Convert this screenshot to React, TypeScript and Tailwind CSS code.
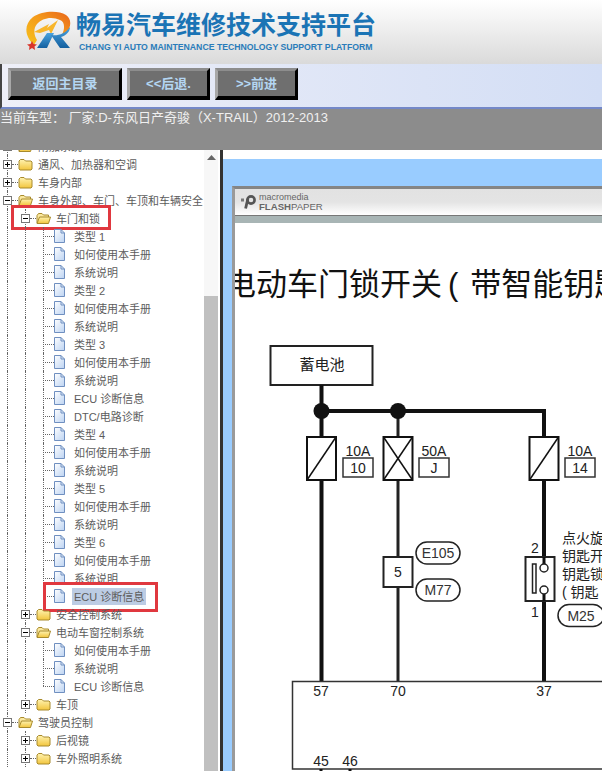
type Row = {
  level: 0 | 1 | 2;
  label: string;
  kind?: "plus" | "minus";
  last?: boolean;
  selected?: boolean;
  marker?: "door" | "ecu";
};

const howTo = "如何使用本手册";
const about = "系统说明";
const ecu = "ECU 诊断信息";

const rows: Row[] = [
  { level: 0, kind: "minus", label: "附加系统" },
  { level: 0, kind: "plus", label: "通风、加热器和空调" },
  { level: 0, kind: "plus", label: "车身内部" },
  { level: 0, kind: "minus", label: "车身外部、车门、车顶和车辆安全" },
  { level: 1, kind: "minus", label: "车门和锁", marker: "door" },
  { level: 2, label: "类型 1" },
  { level: 2, label: howTo },
  { level: 2, label: about },
  { level: 2, label: "类型 2" },
  { level: 2, label: howTo },
  { level: 2, label: about },
  { level: 2, label: "类型 3" },
  { level: 2, label: howTo },
  { level: 2, label: about },
  { level: 2, label: ecu },
  { level: 2, label: "DTC/电路诊断" },
  { level: 2, label: "类型 4" },
  { level: 2, label: howTo },
  { level: 2, label: about },
  { level: 2, label: "类型 5" },
  { level: 2, label: howTo },
  { level: 2, label: about },
  { level: 2, label: "类型 6" },
  { level: 2, label: howTo },
  { level: 2, label: about },
  { level: 2, label: ecu, last: true, selected: true, marker: "ecu" },
  { level: 1, kind: "plus", label: "安全控制系统" },
  { level: 1, kind: "minus", label: "电动车窗控制系统" },
  { level: 2, label: howTo },
  { level: 2, label: about },
  { level: 2, label: ecu, last: true },
  { level: 1, kind: "plus", label: "车顶" },
  { level: 0, kind: "minus", label: "驾驶员控制" },
  { level: 1, kind: "plus", label: "后视镜" },
  { level: 1, kind: "plus", label: "车外照明系统" },
];

function Guide({ half }: { half?: boolean }) {
  return (
    <div className="relative h-full w-[18px] shrink-0">
      <div
        className={`absolute left-[7px] top-0 border-l border-dotted border-[#666] ${half ? "h-1/2" : "h-full"}`}
      />
    </div>
  );
}

function Expander({ kind }: { kind: "plus" | "minus" }) {
  return (
    <div className="relative flex h-full w-[18px] shrink-0 items-center">
      <div className="absolute left-[7px] top-0 h-full border-l border-dotted border-[#666]" />
      <div className="absolute left-[12px] top-1/2 w-[6px] border-t border-dotted border-[#666]" />
      <div className="relative ml-[3px] flex h-[9px] w-[9px] items-center justify-center border border-[#777] bg-white">
        <div className="h-px w-[5px] bg-black" />
        {kind === "plus" && <div className="absolute h-[5px] w-px bg-black" />}
      </div>
    </div>
  );
}

function Folder({ open }: { open: boolean }) {
  return (
    <svg width="15" height="13" viewBox="0 0 15 13" className="mr-[5px] shrink-0">
      <defs>
        <linearGradient id="folderFill" x1="0" y1="0" x2="0" y2="1">
          <stop offset="0" stopColor="#fff3b0" />
          <stop offset="1" stopColor="#f2c53d" />
        </linearGradient>
      </defs>
      {open ? (
        <>
          <path d="M1 11V3.5L2.5 1.5H6L7.5 3H12.5V5" fill="#fbe9a0" stroke="#a88a2c" />
          <path d="M1 11.5L3.5 5H14.5L12.5 11.5Z" fill="url(#folderFill)" stroke="#a88a2c" />
        </>
      ) : (
        <path
          d="M1 11V3L2.5 1.5H6L7.5 3H13L14 4V11L13 12H2Z"
          fill="url(#folderFill)"
          stroke="#a88a2c"
        />
      )}
    </svg>
  );
}

function Doc() {
  return (
    <svg width="11" height="14" viewBox="0 0 11 14" className="mr-[7px] shrink-0">
      <defs>
        <linearGradient id="docFill" x1="0" y1="0" x2="1" y2="1">
          <stop offset="0" stopColor="#ffffff" />
          <stop offset="1" stopColor="#bcd3f2" />
        </linearGradient>
      </defs>
      <path d="M0.5 0.5H7L10.5 4V13.5H0.5Z" fill="url(#docFill)" stroke="#6f8fc0" />
      <path d="M7 0.5V4H10.5" fill="none" stroke="#6f8fc0" />
    </svg>
  );
}

function TreeRow({ row }: { row: Row }) {
  return (
    <div className="relative flex h-[18px] items-center whitespace-nowrap">
      {row.level === 0 && <Expander kind={row.kind!} />}
      {row.level === 1 && (
        <>
          <Guide />
          <Expander kind={row.kind!} />
        </>
      )}
      {row.level === 2 && (
        <>
          <Guide />
          <Guide />
          <div className="relative h-full w-[18px] shrink-0">
            <Guide half={row.last} />
            <div className="absolute left-[7px] top-1/2 w-[11px] border-t border-dotted border-[#666]" />
          </div>
          <Doc />
        </>
      )}
      {row.level < 2 && <Folder open={row.kind === "minus"} />}
      <span
        className={`inline-block pt-[2px] text-[11px] leading-[15px] text-[#5c5c5c] ${row.level === 2 ? "px-[2px]" : ""} ${row.selected ? "bg-[#bccce4]" : ""}`}
      >
        {row.label}
      </span>
      {row.marker === "door" && (
        <div className="absolute left-[11px] top-[-4px] h-[25px] w-[100px] border-[3px] border-[#e0383f]" />
      )}
      {row.marker === "ecu" && (
        <div className="absolute left-[43px] top-[-5px] h-[30px] w-[115px] border-[3px] border-[#e0383f]" />
      )}
    </div>
  );
}

function NavButton({ label, className }: { label: string; className: string }) {
  return (
    <button
      className={`flex h-[32px] items-center justify-center border-[3px] border-b-[4px] border-t-[#8d8d8d] border-l-[#a8a8a8] border-r-black border-b-black bg-[#6f6f6f] text-[13px] font-bold text-[#b4d6f2] ${className}`}
    >
      {label}
    </button>
  );
}

function Logo() {
  return (
    <svg width="48" height="44" viewBox="25 10 48 44" className="shrink-0">
      <defs>
        <linearGradient id="ring" x1="0" y1="1" x2="1" y2="0">
          <stop offset="0" stopColor="#f6c21c" />
          <stop offset="0.55" stopColor="#f49a1a" />
          <stop offset="1" stopColor="#e8641a" />
        </linearGradient>
        <linearGradient id="blue" x1="0" y1="0" x2="0" y2="1">
          <stop offset="0" stopColor="#4aa3e0" />
          <stop offset="1" stopColor="#14609f" />
        </linearGradient>
      </defs>
      <path
        d="M34 45C24 36 24 24 33 17C42 11 58 10 66 15C72 19 71 27 67 32L62 35C65 28 65 22 60 20C52 16 42 18 37 24C33 29 34 35 37 40Z"
        fill="url(#ring)"
      />
      <path d="M34 32L49 24L47 28L58 20L51 34L49 30L40 33Z" fill="#f8b62a" />
      <path d="M32 41L33.5 44L37 44.5L34.5 46.5L35 50L32 48L29 50L29.5 46.5L27 44.5L30.5 44Z" fill="#d8352a" />
      <path d="M47 33H54L47 48H37Z" fill="url(#blue)" />
      <path d="M51 35C58 36 65 34 70 27C70 31 67 35 61 37L70 48H60Z" fill="url(#blue)" />
    </svg>
  );
}

function Fuse({ x, cross }: { x: number; cross?: boolean }) {
  return (
    <g stroke="#111" fill="#fff">
      <rect x={x} y="437" width="29" height="43" strokeWidth="2" />
      <line x1={x} y1="480" x2={x + 29} y2="437" strokeWidth="1.5" />
      {cross && <line x1={x} y1="437" x2={x + 29} y2="480" strokeWidth="1.5" />}
    </g>
  );
}

function FuseLabel({ x, amps, slot }: { x: number; amps: string; slot: string }) {
  return (
    <g fontSize="14" fill="#222" textAnchor="middle">
      <text x={x + 15} y="456">
        {amps}
      </text>
      <rect x={x} y="458" width="30" height="19" fill="#fff" stroke="#333" strokeWidth="1.5" />
      <text x={x + 15} y="473">
        {slot}
      </text>
    </g>
  );
}

function Pill({ x, y, w, label }: { x: number; y: number; w: number; label: string }) {
  return (
    <g>
      <rect x={x} y={y} width={w} height="22" rx="11" fill="#fff" stroke="#222" strokeWidth="1.5" />
      <text x={x + w / 2} y={y + 16} fontSize="14" fill="#333" textAnchor="middle">
        {label}
      </text>
    </g>
  );
}

function Diagram() {
  return (
    <svg width="367" height="441" viewBox="235 330 367 441" className="block">
      <rect x="270.5" y="346" width="102" height="39" fill="#fff" stroke="#222" strokeWidth="2" />
      <text x="322" y="370" fontSize="15" fill="#222" textAnchor="middle">
        蓄电池
      </text>

      <line x1="321.5" y1="385" x2="321.5" y2="682" stroke="#111" strokeWidth="4" />
      <line x1="321" y1="411" x2="546" y2="411" stroke="#111" strokeWidth="4" />
      <line x1="398" y1="411" x2="398" y2="682" stroke="#222" strokeWidth="3" />
      <line x1="544" y1="409" x2="544" y2="682" stroke="#111" strokeWidth="4" />
      <circle cx="321.5" cy="411" r="8" fill="#111" />
      <circle cx="398" cy="411" r="8" fill="#111" />

      <Fuse x={307} />
      <Fuse x={383.5} cross />
      <Fuse x={529.5} />
      <FuseLabel x={343} amps="10A" slot="10" />
      <FuseLabel x={419} amps="50A" slot="J" />
      <FuseLabel x={565} amps="10A" slot="14" />

      <rect x="383.5" y="557" width="29" height="30" fill="#fff" stroke="#222" strokeWidth="2" />
      <text x="398" y="577" fontSize="14" fill="#222" textAnchor="middle">
        5
      </text>
      <Pill x={416} y={542} w={44} label="E105" />
      <Pill x={416} y={579} w={44} label="M77" />

      <rect x="525.5" y="557" width="29" height="44" fill="#fff" stroke="#222" strokeWidth="2" />
      <rect x="532.5" y="564" width="3.5" height="29" fill="#fff" stroke="#222" strokeWidth="1.5" />
      <line x1="544" y1="557" x2="544" y2="564" stroke="#111" strokeWidth="3" />
      <line x1="544" y1="594" x2="544" y2="601" stroke="#111" strokeWidth="3" />
      <circle cx="544" cy="568" r="4" fill="#fff" stroke="#222" strokeWidth="1.5" />
      <circle cx="544" cy="590" r="4" fill="#fff" stroke="#222" strokeWidth="1.5" />
      <text x="535" y="553" fontSize="14" fill="#222" textAnchor="middle">
        2
      </text>
      <text x="535" y="617" fontSize="14" fill="#222" textAnchor="middle">
        1
      </text>
      <g fontSize="14" fill="#222">
        <text x="562" y="543">
          点火旋
        </text>
        <text x="562" y="561">
          钥匙开
        </text>
        <text x="562" y="579">
          钥匙锁
        </text>
        <text x="562" y="597">
          ( 钥匙
        </text>
      </g>
      <Pill x={558} y={604.5} w={46} label="M25" />

      <path d="M610 681.5H292.5V769H610" fill="#fff" stroke="#333" strokeWidth="1.5" />
      <g fontSize="14" fill="#222" textAnchor="middle">
        <text x="321" y="696">
          57
        </text>
        <text x="398" y="696">
          70
        </text>
        <text x="544" y="696">
          37
        </text>
        <text x="321" y="766">
          45
        </text>
        <text x="350" y="766">
          46
        </text>
      </g>
      <line x1="321" y1="769" x2="321" y2="771" stroke="#111" strokeWidth="3" />
      <line x1="350" y1="769" x2="350" y2="771" stroke="#111" strokeWidth="3" />
    </svg>
  );
}

export default function App() {
  return (
    <div className="flex h-[771px] w-[602px] flex-col overflow-hidden bg-white font-['Liberation_Sans','Noto_Sans_CJK_SC',sans-serif]">
      <div className="flex h-16 shrink-0 items-center bg-gradient-to-b from-white to-[#dadada] pl-[25px]">
        <Logo />
        <div className="ml-[3px] flex flex-col">
          <div className="text-[25px] font-bold leading-[30px] text-[#1b74b5] whitespace-nowrap">
            畅易汽车维修技术支持平台
          </div>
          <div className="ml-[3px] text-[8.7px] font-bold leading-[14px] text-[#2a7cba] whitespace-nowrap">
            CHANG YI AUTO MAINTENANCE TECHNOLOGY SUPPORT PLATFORM
          </div>
        </div>
      </div>

      <div className="flex h-[45px] shrink-0 items-start gap-[5px] border-b-2 border-l-2 border-b-[#7488c8] border-l-[#444] bg-gradient-to-r from-[#eeeff8] to-[#d3def5] pl-[6px] pt-[4px]">
        <NavButton label="返回主目录" className="w-[114px]" />
        <NavButton label="<<后退." className="w-[83px]" />
        <NavButton label=">>前进" className="w-[83px]" />
      </div>

      <div className="h-[41px] shrink-0 bg-[#8c8c8c] text-[13px] leading-[18px] text-[#f0f0f0] whitespace-nowrap">
        当前车型： 厂家:D-东风日产奇骏（X-TRAIL）2012-2013
      </div>

      <div className="flex min-h-0 flex-1">
        <div className="flex w-[220px] shrink-0 bg-white pr-[2px]">
          <div className="w-[204px] shrink-0 overflow-hidden">
            <div className="mt-[-13px]">
              {rows.map((row, i) => (
                <TreeRow key={i} row={row} />
              ))}
            </div>
          </div>
          <div className="flex w-[14px] shrink-0 flex-col bg-[#f7f7f7]">
            <div className="flex h-[146px] shrink-0 justify-center pt-[5px]">
              <svg width="9" height="5" viewBox="0 0 9 5">
                <path d="M4.5 0L9 5H0Z" fill="#666" />
              </svg>
            </div>
            <div className="flex-1 bg-[#c0c0c0]" />
          </div>
        </div>

        <div className="flex min-w-0 flex-1 flex-col border-l-[3px] border-l-[#333]">
          <div className="h-[9px] shrink-0 bg-white" />
          <div className="flex-1 bg-[#99ccff] pl-[9px] pt-[27px]">
            <div className="h-full border-l-[3px] border-t-[3px] border-l-[#9a9a9a] border-t-[#858585] bg-white">
              <div className="flex h-[27px] items-center gap-[2px] border-b border-b-[#777] bg-gradient-to-b from-[#e2e2e2] via-[#e4e4e4] to-white pl-[6px]">
                <svg width="16" height="14" viewBox="0 0 16 14" className="shrink-0">
                  <circle cx="10" cy="5" r="3.6" fill="none" stroke="#555" strokeWidth="2.6" />
                  <line x1="6.8" y1="4" x2="4.6" y2="13.5" stroke="#555" strokeWidth="2.8" />
                  <rect x="0" y="3.5" width="3" height="3" fill="#777" />
                </svg>
                <div className="pt-[1px] text-[#666]">
                  <div className="text-[9px] leading-[9px]">macromedia</div>
                  <div className="text-[9.6px] leading-[10px]">
                    <span className="font-bold">FLASH</span>PAPER
                  </div>
                </div>
              </div>
              <div className="h-[7px] bg-[#a8b5b5]" />
              <div className="overflow-hidden pt-[44px]">
                <div className="ml-[-10px] flex text-[31px] leading-[36px] text-[#111] whitespace-nowrap">
                  电动车门锁开关
                  <span className="ml-[6px] mr-[12px]">(</span>
                  带智能钥匙
                </div>
              </div>
              <div className="mt-[27px]">
                <Diagram />
              </div>
            </div>
          </div>
        </div>
      </div>
    </div>
  );
}
